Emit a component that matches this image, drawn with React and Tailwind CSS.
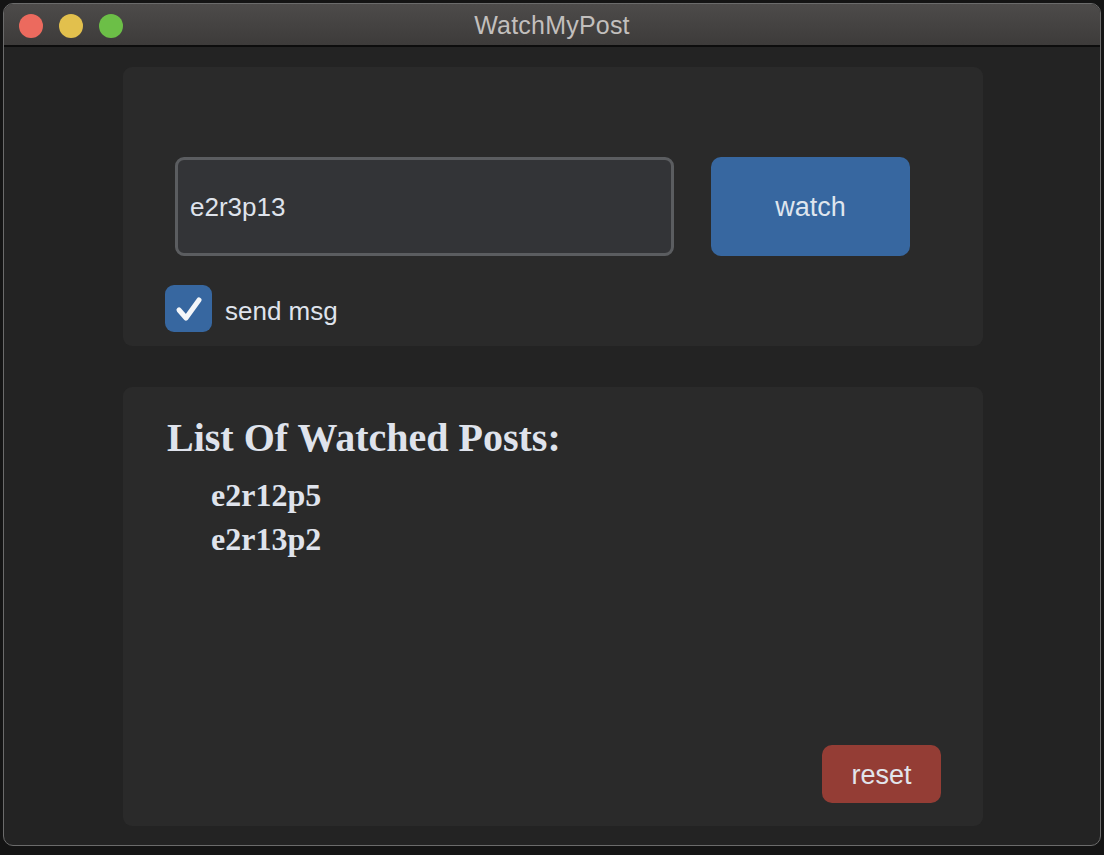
import { useState } from "react";

const posts = ["e2r12p5", "e2r13p2"];

function TrafficLights() {
  return (
    <div className="flex items-center gap-[16px] pl-[15px]">
      <span className="h-[24px] w-[24px] rounded-full bg-[#ec6a5e]" />
      <span className="h-[24px] w-[24px] rounded-full bg-[#e2c04d]" />
      <span className="h-[24px] w-[24px] rounded-full bg-[#6cbf47]" />
    </div>
  );
}

export default function App() {
  const [postId, setPostId] = useState("e2r3p13");
  const [sendMsg, setSendMsg] = useState(true);

  return (
    <div className="h-[855px] w-[1104px] overflow-hidden bg-[#141414] pl-[3px] pt-[3px] font-['Liberation_Sans',sans-serif]">
      <div className="flex h-[843px] w-[1098px] flex-col overflow-hidden rounded-[10px] border border-[#6b6b6b] bg-[#232323]">
        {/* title bar */}
        <div className="relative flex h-[43px] shrink-0 items-center border-b-[2px] border-[#0d0d0d] bg-gradient-to-b from-[#4d4b4a] to-[#3d3b3a] pt-[3px]">
          <TrafficLights />
          <div className="absolute inset-0 flex items-center justify-center pt-[3px] text-[25px] tracking-[0.2px] text-[#c2bfbd]">
            WatchMyPost
          </div>
        </div>

        <div className="flex flex-1 flex-col gap-[41px] pl-[119px] pt-[20px]">
          {/* watch form */}
          <div className="flex h-[279px] w-[860px] flex-col rounded-[9px] bg-[#2a2a2a] pl-[42px] pt-[90px]">
            <div className="flex items-center gap-[37px] pl-[10px]">
              <input
                type="text"
                value={postId}
                onChange={(e) => setPostId(e.target.value)}
                className="h-[99px] w-[499px] rounded-[9px] border-[3px] border-[#5b5d60] bg-[#333437] px-[12px] pt-[2px] text-[26px] text-[#dfe3ec] outline-none"
              />
              <button
                type="button"
                className="h-[99px] w-[199px] rounded-[10px] bg-[#3767a0] pt-[2px] text-[27px] text-[#dfe5ee]"
              >
                watch
              </button>
            </div>
            <label className="mt-[29px] flex items-center gap-[13px] text-[26px] text-[#dfe3ec]">
              <button
                type="button"
                onClick={() => setSendMsg(!sendMsg)}
                className="flex h-[47px] w-[47px] items-center justify-center rounded-[9px] bg-[#3767a0]"
              >
                {sendMsg && (
                  <svg width="28" height="26" viewBox="0 0 28 26" fill="none">
                    <path
                      d="M4 14 L11 22 L24 4"
                      stroke="#f4f6f9"
                      strokeWidth="5"
                      strokeLinecap="round"
                      strokeLinejoin="round"
                    />
                  </svg>
                )}
              </button>
              <span className="pt-[6px]">send msg</span>
            </label>
          </div>

          {/* watched list */}
          <div className="flex h-[439px] w-[860px] flex-col rounded-[9px] bg-[#2a2a2a] pb-[23px] pl-[44px] pr-[42px] pt-[27px]">
            <h2 className="font-['Liberation_Serif',serif] text-[40px] font-bold leading-[48px] text-[#dfe3ec]">
              List Of Watched Posts:
            </h2>
            <ul className="mt-[11px] pl-[44px] font-['Liberation_Serif',serif] text-[32px] font-bold leading-[44px] text-[#dfe3ec]">
              {posts.map((p) => (
                <li key={p}>{p}</li>
              ))}
            </ul>
            <div className="mt-auto flex justify-end">
              <button
                type="button"
                className="h-[58px] w-[119px] rounded-[10px] bg-[#943d35] pt-[2px] text-[27px] text-[#e2e5ec]"
              >
                reset
              </button>
            </div>
          </div>
        </div>
      </div>
    </div>
  );
}
